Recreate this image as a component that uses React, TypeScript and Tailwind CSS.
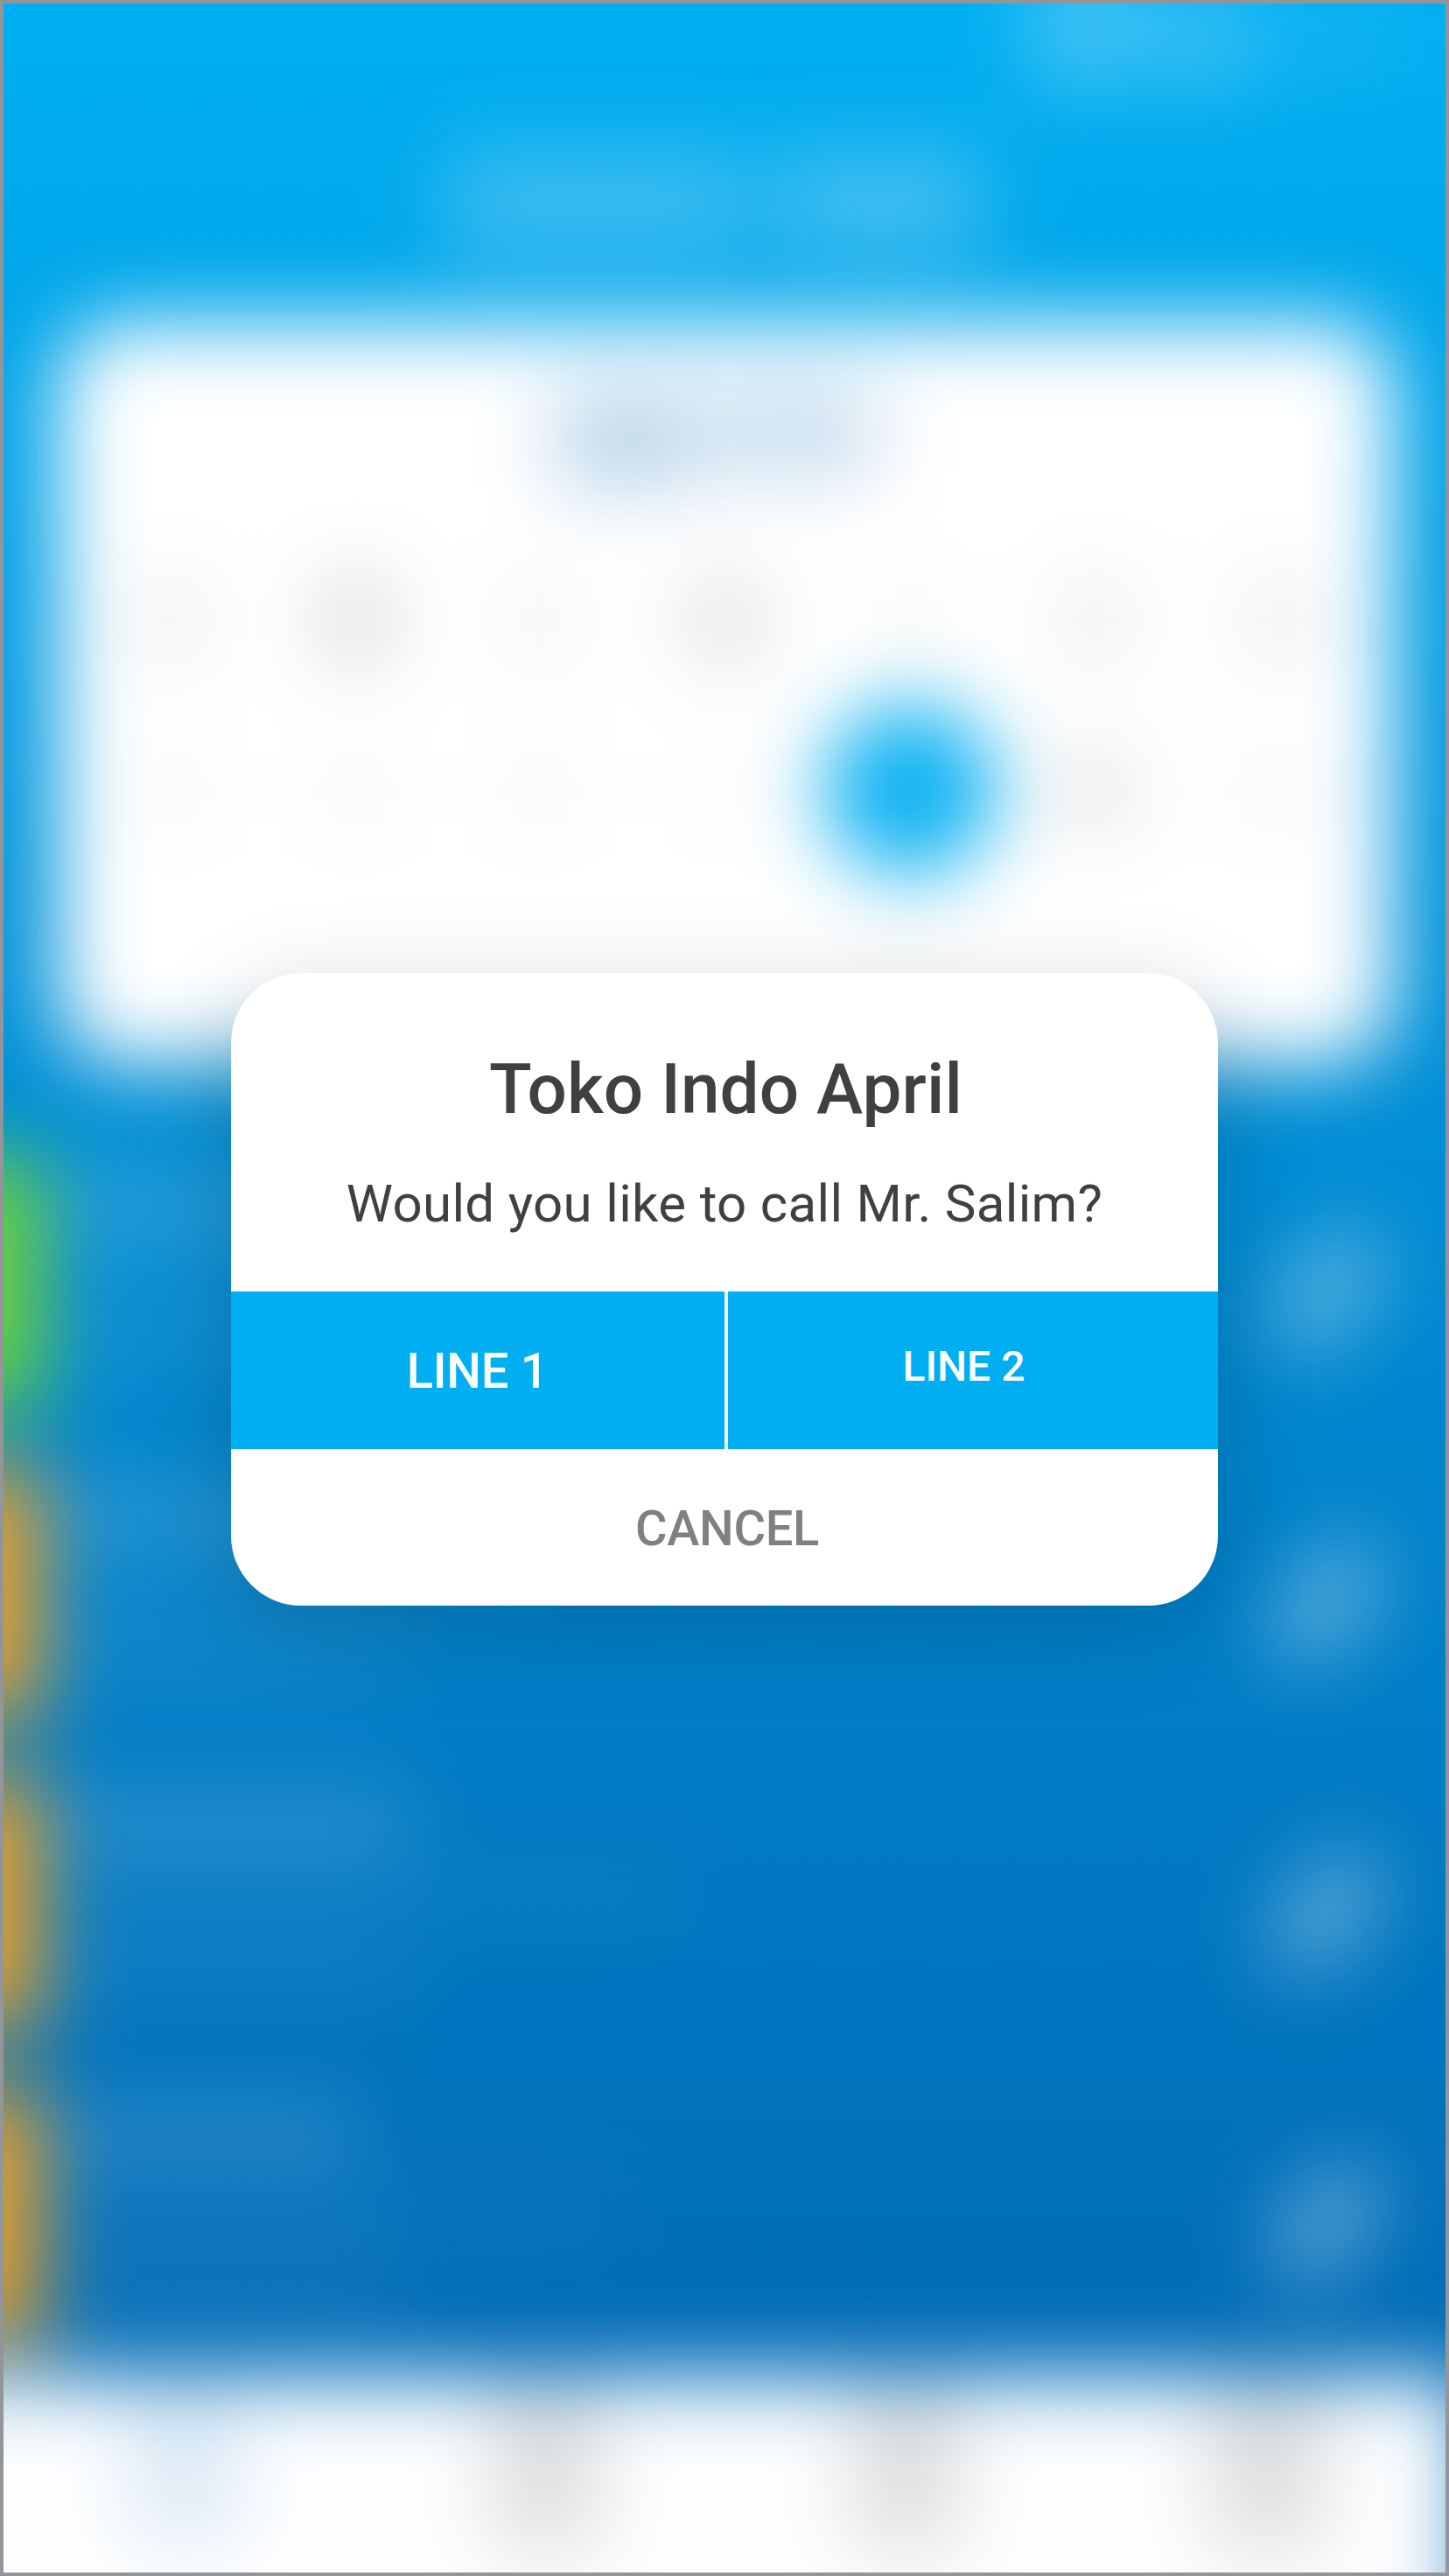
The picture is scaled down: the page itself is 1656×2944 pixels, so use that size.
const weekdays = [
  'bg-black/7',
  'bg-black/16',
  'bg-black/5',
  'bg-black/14',
  'bg-black/3',
  'bg-black/8',
  'bg-black/8',
];

const days = [
  'bg-black/3',
  'bg-black/3',
  'bg-black/3',
  'bg-black/2',
  'today',
  'bg-black/11',
  'bg-black/4',
];

const visits = [
  { bar: 'bg-[#72d432]', name: 'w-[420px]', address: 'w-[600px]' },
  { bar: 'bg-[#f0a022]', name: 'w-[420px]', address: 'w-[580px]' },
  { bar: 'bg-[#f0a022]', name: 'w-[410px]', address: 'w-[710px]' },
  { bar: 'bg-[#f0a022]', name: 'w-[350px]', address: 'w-[640px]' },
];

function Header() {
  return (
    <div className="h-[364px]">
      <div className="flex h-[120px] items-start justify-end gap-2 pr-10">
        <div className="-mt-12 h-[146px] w-[120px] rounded-[40px] bg-white/27" />
        <div className="-mt-5 h-[120px] w-[130px] rounded-[40px] bg-white/22" />
        <div className="h-[82px] w-[170px] bg-white/8" />
      </div>
      <div className="flex gap-8 pt-12 pl-[506px]">
        <div className="h-[120px] w-[345px] bg-white/24" />
        <div className="h-[120px] w-[235px] bg-white/26" />
      </div>
    </div>
  );
}

function Calendar() {
  return (
    <div className="ml-[62px] h-[848px] w-[1526px] rounded-[72px] bg-white pt-20">
      <div className="flex h-[120px] items-start gap-4 pl-[570px]">
        <div className="h-[108px] w-[160px] bg-[#1c75bc]/32" />
        <div className="h-[92px] w-[190px] bg-[#1c75bc]/27" />
      </div>
      <div className="grid grid-cols-7 px-6 pt-[94px]">
        {weekdays.map((tone, i) => (
          <div key={i} className="flex justify-center">
            <div className={`h-[92px] w-[76px] ${tone}`} />
          </div>
        ))}
      </div>
      <div className="grid h-[200px] grid-cols-7 items-center px-6 pt-[98px]">
        {days.map((tone, i) => (
          <div key={i} className="flex justify-center">
            {tone === 'today' ? (
              <div className="-my-14 size-[198px] shrink-0 rounded-full bg-[#0bb1f2]" />
            ) : (
              <div className={`h-[84px] w-[84px] ${tone}`} />
            )}
          </div>
        ))}
      </div>
    </div>
  );
}

function VisitList() {
  return (
    <div className="flex h-[1500px] flex-col gap-[64px] pt-[104px]">
      {visits.map((v, i) => (
        <div key={i} className="flex h-[291px] items-center">
          <div className={`-ml-[100px] h-full w-[142px] shrink-0 ${v.bar}`} />
          <div className="flex h-full w-[1392px] flex-col gap-4 bg-transparent pt-4 pl-4">
            <div className={`h-[76px] bg-white/16 ${v.name}`} />
            <div className={`h-[60px] bg-white/5 ${v.address}`} />
            <div className="h-[72px] w-[400px] bg-white/7" />
          </div>
          <div className="mt-5 h-[84px] w-[156px] shrink-0 -rotate-50 rounded-full bg-white/38" />
        </div>
      ))}
    </div>
  );
}

function TabBar() {
  return (
    <div className="-ml-[120px] flex h-[400px] w-[1796px] bg-[#fdfeff] pl-[120px]">
      <div className="flex w-[414px] justify-center pt-8">
        <div className="h-[150px] w-[120px] bg-[#1c75bc]/16" />
      </div>
      <div className="flex w-[412px] justify-center pt-3">
        <div className="h-[184px] w-[122px] bg-black/13" />
      </div>
      <div className="flex w-[412px] justify-center pt-3">
        <div className="h-[184px] w-[122px] bg-black/13" />
      </div>
      <div className="flex w-[412px] justify-center pt-3">
        <div className="h-[184px] w-[130px] bg-black/13" />
      </div>
    </div>
  );
}

function Dialog() {
  return (
    <div
      role="dialog"
      className="mt-[1108px] flex h-[722.5px] w-[1128px] flex-col overflow-hidden rounded-[80px] bg-white text-center text-[#404041] shadow-[0_24px_110px_rgba(0,0,0,0.18)]"
    >
      <div className="h-[364px] shrink-0 pt-[85px]">
        <h1 className="pl-[3px] text-[80px] leading-[96px] font-medium tracking-[0.08px]">
          Toko Indo April
        </h1>
        <p className="mt-[47px] text-[60px] leading-[72px] tracking-[0.34px]">
          Would you like to call Mr. Salim?
        </p>
      </div>
      <div className="flex h-[180px] shrink-0 gap-1 font-medium text-white">
        <button className="w-[564px] bg-[#00aff2] pt-0.5 pr-px text-[56px] leading-[60px] tracking-[-0.3px]">
          LINE 1
        </button>
        <button className="w-[560px] bg-[#00aff2] pr-[21px] pb-2 text-[48px] leading-[56px]">
          LINE 2
        </button>
      </div>
      <button className="flex-1 pt-1 pl-1.5 text-[56px] leading-[60px] font-medium tracking-[-0.3px] text-[#808080]">
        CANCEL
      </button>
    </div>
  );
}

export default function App() {
  return (
    <div className="relative flex h-[2944px] w-[1656px] justify-center overflow-hidden border-4 border-[#939598] bg-linear-to-b from-[#00aff2] to-[#0069b4] to-95% font-['Roboto',sans-serif]">
      <div className="absolute inset-x-0 top-0 w-[1648px] blur-[47px]" aria-hidden="true">
        <Header />
        <Calendar />
        <VisitList />
        <TabBar />
      </div>
      <div className="relative">
        <Dialog />
      </div>
    </div>
  );
}
